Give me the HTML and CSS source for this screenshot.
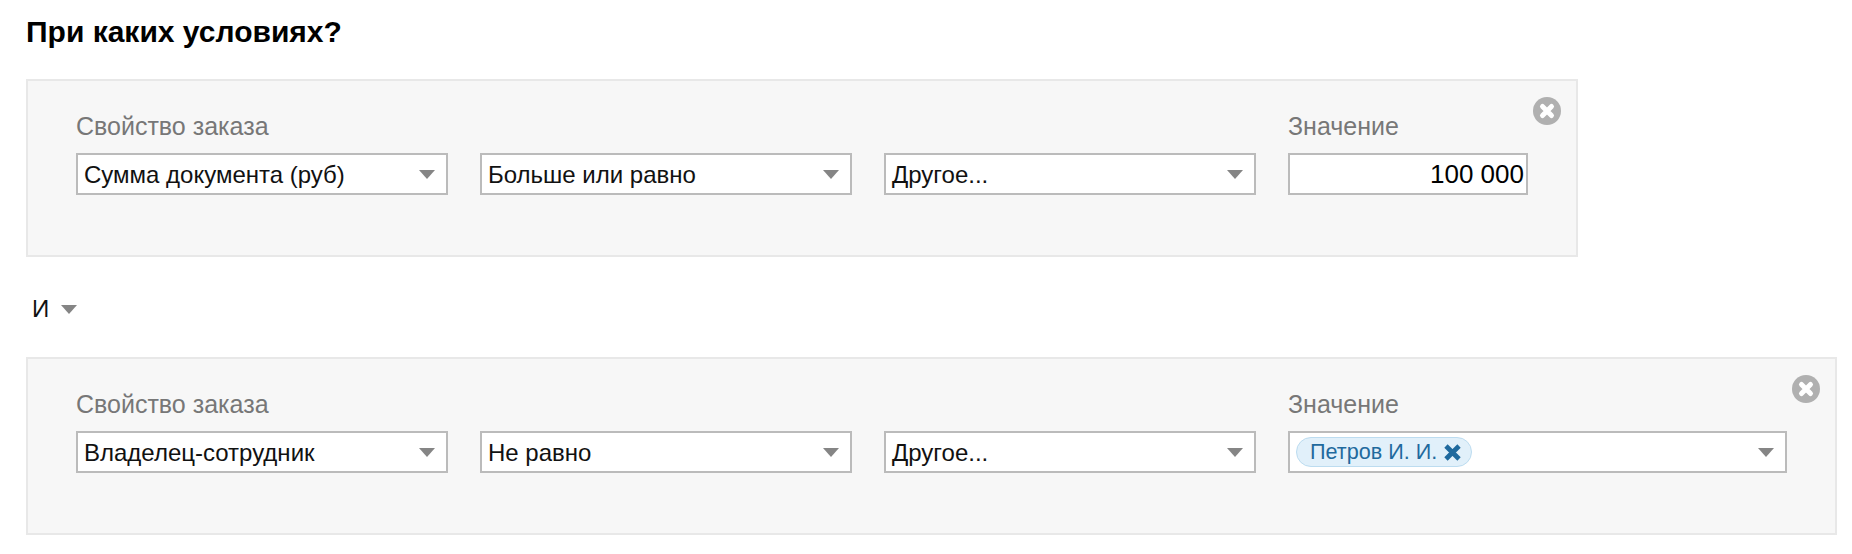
FILE: index.html
```html
<!DOCTYPE html>
<html lang="ru">
<head>
    <meta charset="UTF-8">
    <title>При каких условиях?</title>
    <link rel="stylesheet" href="styles.css">
</head>
<body>
    <svg class="icon-defs" width="0" height="0">
        <symbol id="arrow" viewBox="0 0 16 9">
            <path d="M0 0H16L8 9Z"/>
        </symbol>
        <symbol id="close" viewBox="0 0 28 28">
            <circle cx="14" cy="14" r="14" fill="#b0b0b0"/>
            <path d="M9.5 9.5L18.5 18.5M18.5 9.5L9.5 18.5" stroke="#fff" stroke-width="5" stroke-linecap="round"/>
        </symbol>
    </svg>

    <h2 class="title">При каких условиях?</h2>

    <div class="condition">
        <svg class="remove"><use href="#close"/></svg>
        <div class="fields">
            <div class="field">
                <label>Свойство заказа</label>
                <div class="select">Сумма документа (руб)<svg class="arrow"><use href="#arrow"/></svg></div>
            </div>
            <div class="field">
                <label>&nbsp;</label>
                <div class="select">Больше или равно<svg class="arrow"><use href="#arrow"/></svg></div>
            </div>
            <div class="field">
                <label>&nbsp;</label>
                <div class="select">Другое...<svg class="arrow"><use href="#arrow"/></svg></div>
            </div>
            <div class="field field-short">
                <label>Значение</label>
                <div class="select number">100 000</div>
            </div>
        </div>
    </div>

    <div class="joiner">И<svg class="arrow"><use href="#arrow"/></svg></div>

    <div class="condition">
        <svg class="remove"><use href="#close"/></svg>
        <div class="fields">
            <div class="field">
                <label>Свойство заказа</label>
                <div class="select">Владелец-сотрудник<svg class="arrow"><use href="#arrow"/></svg></div>
            </div>
            <div class="field">
                <label>&nbsp;</label>
                <div class="select">Не равно<svg class="arrow"><use href="#arrow"/></svg></div>
            </div>
            <div class="field">
                <label>&nbsp;</label>
                <div class="select">Другое...<svg class="arrow"><use href="#arrow"/></svg></div>
            </div>
            <div class="field field-wide">
                <label>Значение</label>
                <div class="select">
                    <span class="chip">Петров И. И.
                        <svg class="chip-x" viewBox="0 0 16 16"><path d="M2.5 2.5L13.5 13.5M13.5 2.5L2.5 13.5"/></svg>
                    </span>
                    <svg class="arrow"><use href="#arrow"/></svg>
                </div>
            </div>
        </div>
    </div>
</body>
</html>
```

FILE: styles.css
```css
body {
    margin: 0;
    padding: 0 26px;
    font-family: "Liberation Sans", Arial, sans-serif;
    font-size: 24px;
    color: #111;
    background-color: #fff;
}

.icon-defs {
    position: absolute;
}

.title {
    margin: 0;
    height: 79px;
    padding-top: 14px;
    box-sizing: border-box;
    font-size: 30px;
    line-height: 36px;
    color: #000;
}

.condition {
    position: relative;
    width: fit-content;
    height: 178px;
    box-sizing: border-box;
    padding: 27px 48px 0;
    background-color: #f7f7f7;
    border: 2px solid #e8e8e8;
}

.remove {
    position: absolute;
    top: 16px;
    right: 15px;
    width: 28px;
    height: 28px;
}

.fields {
    display: flex;
    gap: 32px;
}

.field {
    width: 372px;
}

.field-short {
    width: 240px;
}

.field-wide {
    width: 499px;
}

.field label {
    display: block;
    height: 45px;
    font-size: 25px;
    line-height: 36px;
    color: #777;
}

.select {
    display: flex;
    align-items: center;
    justify-content: space-between;
    height: 42px;
    box-sizing: border-box;
    padding: 2px 10px 0 6px;
    background-color: #fff;
    border: 2px solid #bbb;
    white-space: nowrap;
}

.select .arrow {
    margin-right: 1px;
    margin-top: -2px;
}

.number {
    justify-content: flex-end;
    padding: 0 2px 0 0;
    font-size: 26px;
    color: #000;
}

.arrow {
    width: 16px;
    height: 9px;
    fill: #858585;
    flex: none;
}

.joiner {
    display: flex;
    align-items: center;
    height: 100px;
    padding: 4px 0 0 6px;
    box-sizing: border-box;
}

.joiner .arrow {
    margin-left: 12px;
}

.chip {
    display: flex;
    align-items: center;
    gap: 6px;
    height: 30px;
    box-sizing: border-box;
    margin: -2px 0 0;
    padding: 0 9px 0 13px;
    font-size: 21.6px;
    color: #1f6a9e;
    background-color: #e1f0fa;
    border: 1px solid #bcdcf0;
    border-radius: 15px;
}

.chip-x {
    width: 19px;
    height: 19px;
    fill: none;
    stroke: #1f6a9e;
    stroke-width: 4;
}
```
